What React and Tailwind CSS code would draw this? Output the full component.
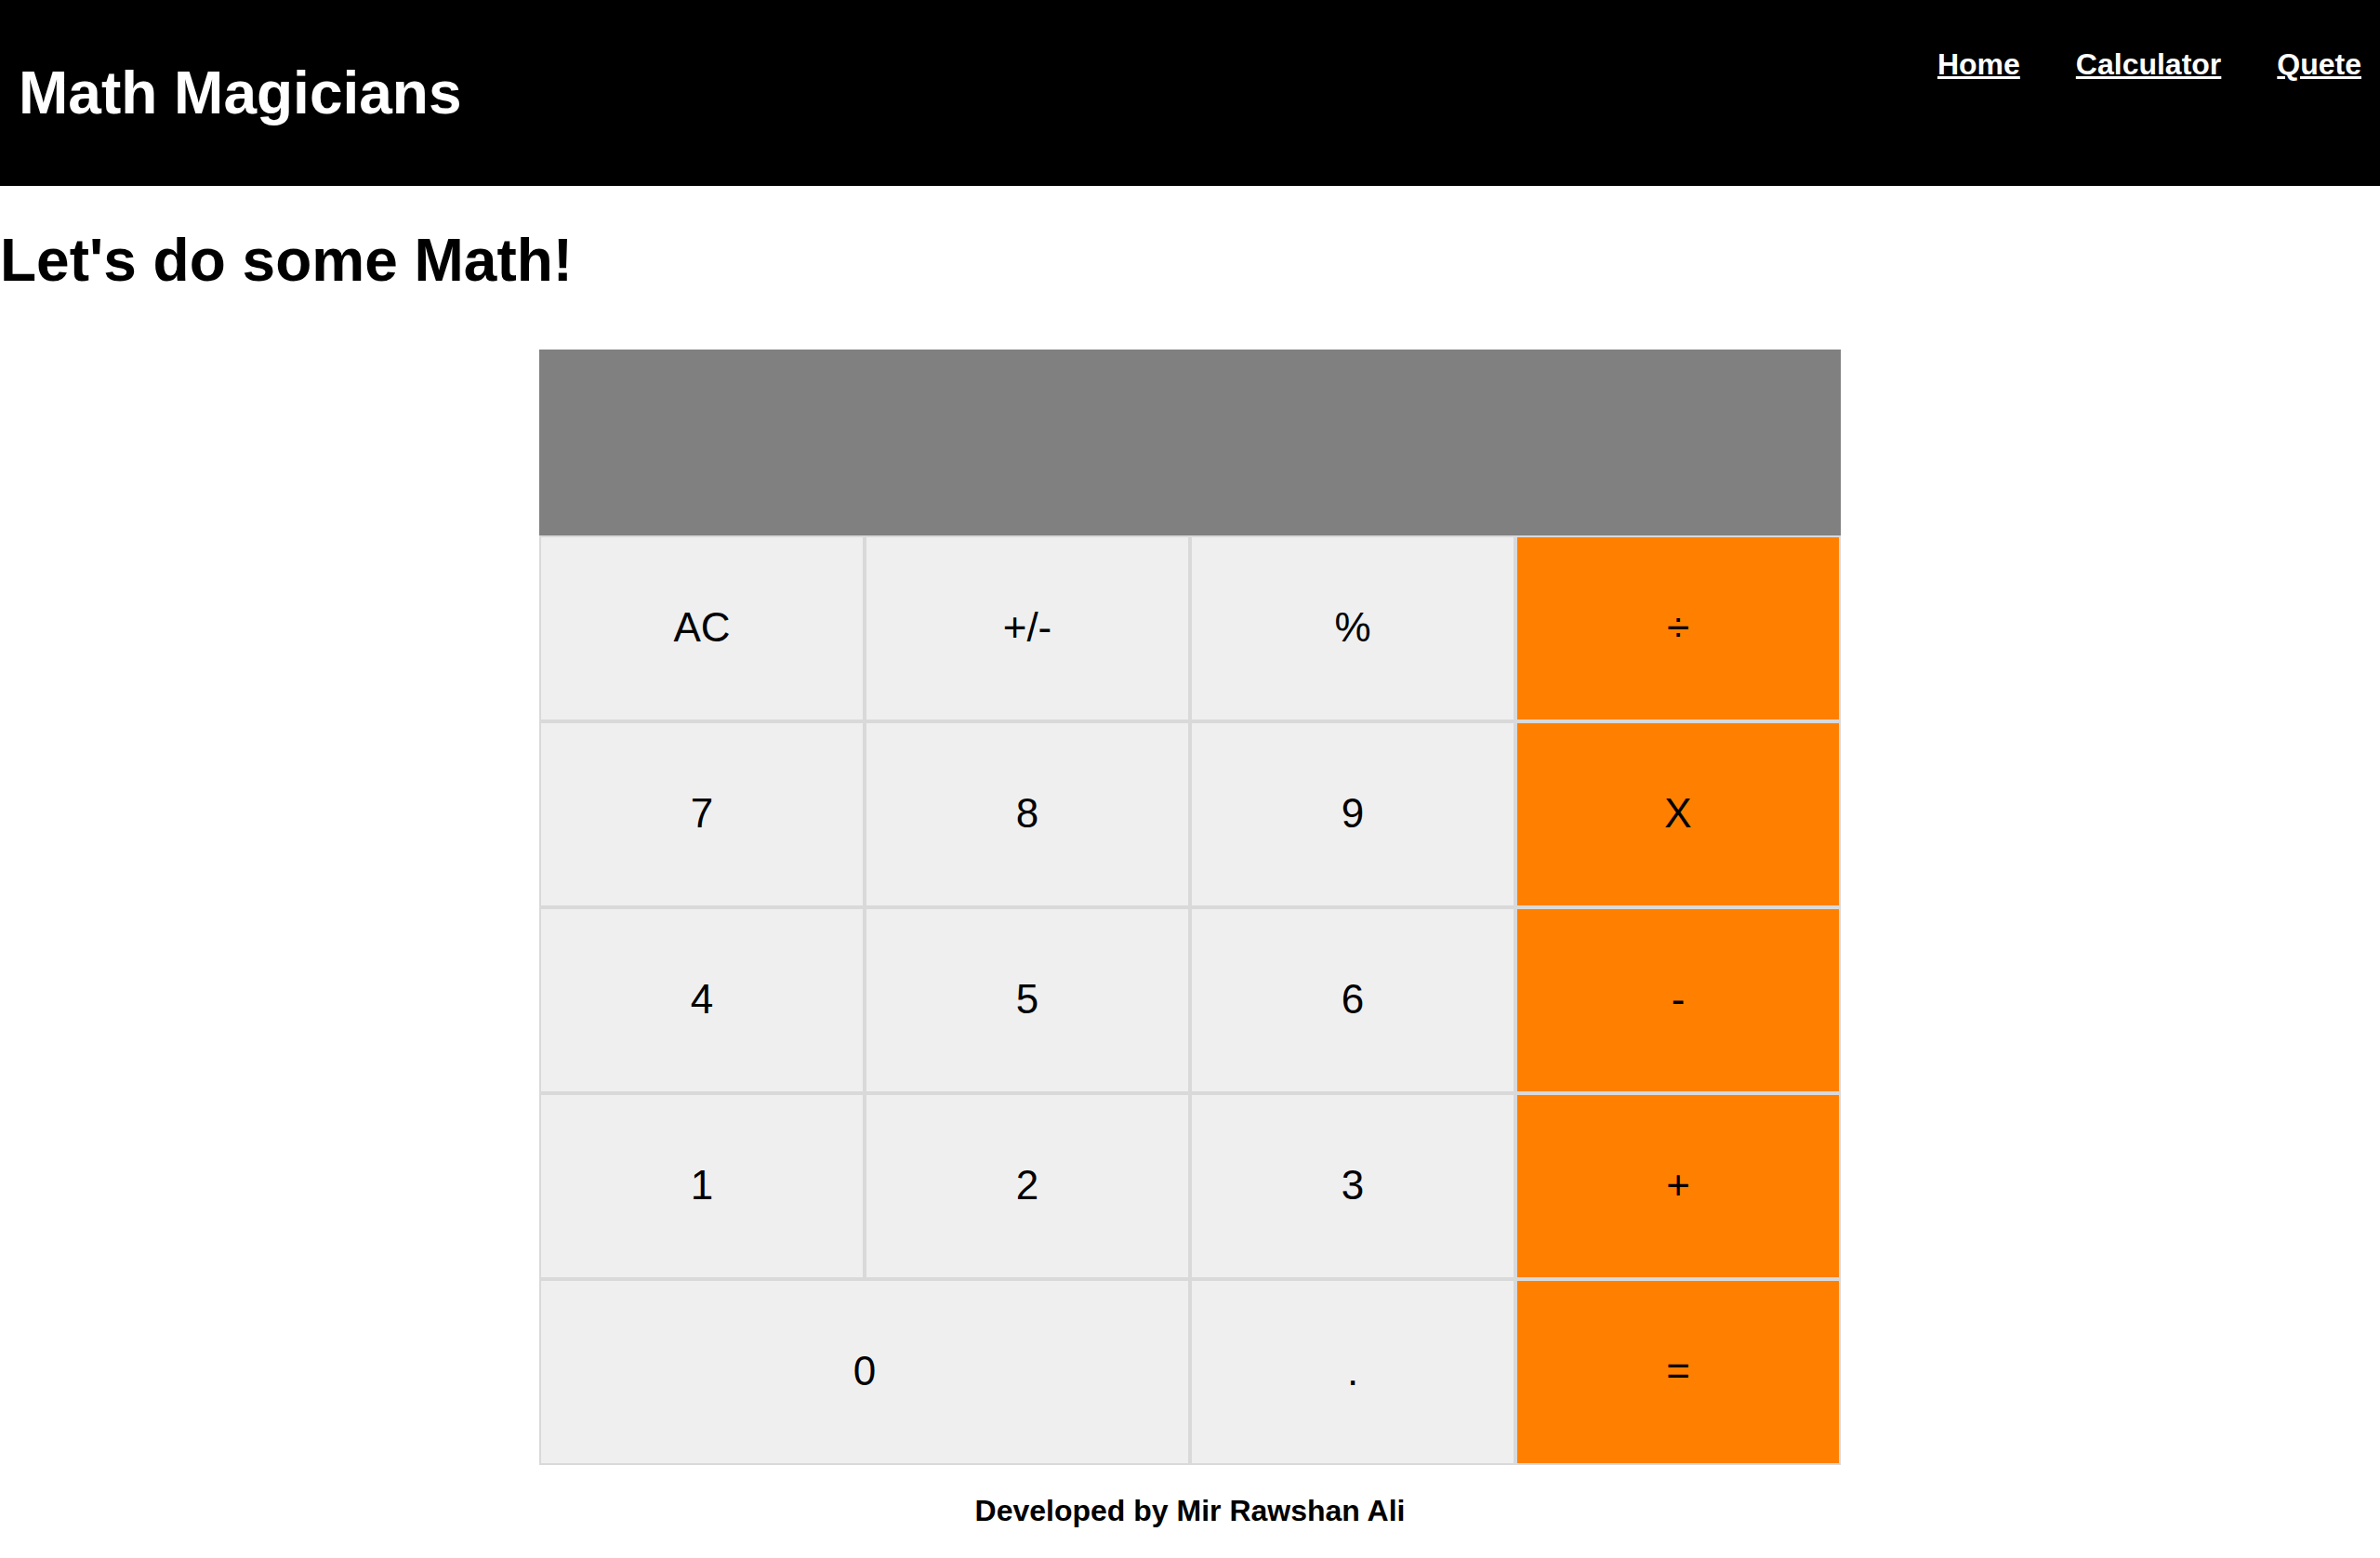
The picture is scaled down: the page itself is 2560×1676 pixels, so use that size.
import React from "react";

const keys = [
  { l: "AC" }, { l: "+/-" }, { l: "%" }, { l: "÷", o: true },
  { l: "7" }, { l: "8" }, { l: "9" }, { l: "X", o: true },
  { l: "4" }, { l: "5" }, { l: "6" }, { l: "-", o: true },
  { l: "1" }, { l: "2" }, { l: "3" }, { l: "+", o: true },
  { l: "0", w: true }, { l: "." }, { l: "=", o: true },
];

export default function App() {
  return (
    <div className="min-h-screen bg-white text-black font-['Liberation_Sans',Arial,sans-serif]">
      <header className="flex justify-between items-start bg-black text-white h-[200px] pl-[20px] pr-[20px]">
        <h1 className="mt-[63px] text-[64px] leading-[74px] font-bold">Math Magicians</h1>
        <nav className="mt-[51px] flex gap-[60px] text-[32px] leading-[37px] font-bold">
          <a href="#" className="underline">Home</a>
          <a href="#" className="underline">Calculator</a>
          <a href="#" className="underline">Quete</a>
        </nav>
      </header>
      <h1 className="mt-[43px] text-[64px] leading-[74px] font-bold">Let&apos;s do some Math!</h1>
      <div className="mx-auto mt-[59px] w-[1400px]">
        <div className="h-[200px] bg-[#808080]"></div>
        <div className="grid grid-cols-4">
          {keys.map((k, i) => (
            <button
              key={i}
              className={
                "h-[200px] border-2 border-[#d9d9d9] text-[44px] leading-none pb-[2px] flex items-center justify-center " +
                (k.o ? "bg-[#ff8000]" : "bg-[#efefef]") +
                (k.w ? " col-span-2" : "")
              }
            >
              {k.l}
            </button>
          ))}
        </div>
      </div>
      <p className="mt-[31px] text-center text-[32px] leading-[37px] font-bold">Developed by Mir Rawshan Ali</p>
    </div>
  );
}
